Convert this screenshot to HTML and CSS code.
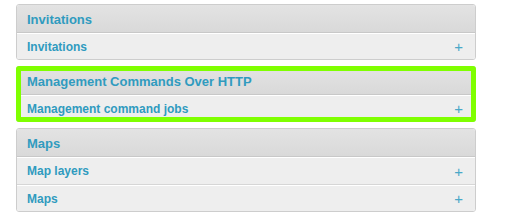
FILE: index.html
```html
<!DOCTYPE html>
<html lang="en">
<head>
  <meta charset="UTF-8" />
  <title>Site administration</title>
  <link rel="stylesheet" href="styles.css">
</head>
<body>
  <div class="dashboard">
    <div class="module">
      <h2>Invitations</h2>
      <div class="row"><a href="#">Invitations</a><span class="add">+</span></div>
    </div>
    <div class="module selected">
      <h2>Management Commands Over HTTP</h2>
      <div class="row"><a href="#">Management command jobs</a><span class="add">+</span></div>
    </div>
    <div class="module">
      <h2>Maps</h2>
      <div class="row"><a href="#">Map layers</a><span class="add">+</span></div>
      <div class="row"><a href="#">Maps</a><span class="add">+</span></div>
    </div>
  </div>
</body>
</html>
```

FILE: styles.css
```css
* { box-sizing: border-box; }
html, body {
  margin: 0;
  padding: 0;
  background: #fff;
  font-family: "Liberation Sans", Arial, sans-serif;
}
.dashboard {
  width: 460px;
  margin: 4px 0 0 16px;
}
.module {
  border: 1px solid #cdcdcd;
  border-radius: 3px;
  margin-bottom: 6px;
  overflow: hidden;
}
.module.selected {
  outline: 5px solid #7fff00;
  outline-offset: -5px;
}
.module h2 {
  margin: 0;
  height: 28px;
  padding: 1px 10px 0;
  line-height: 28px;
  font-size: 13px;
  font-weight: bold;
  color: #309bbf;
  background: linear-gradient(#e3e3e3, #d9d9d9);
  border-bottom: 1px solid #c8c8c8;
}
.row {
  display: flex;
  align-items: center;
  justify-content: space-between;
  height: 28px;
  padding: 0 12px 0 10px;
  background: #eee;
  border-top: 1px solid #fff;
  border-bottom: 1px solid #d6d6d6;
}
.row:last-child { border-bottom: none; height: 26px; }
.row a {
  font-size: 12px;
  font-weight: bold;
  color: #309bbf;
  text-decoration: none;
}
.add {
  font-size: 15px;
  font-weight: normal;
  color: #4aa8c8;
}
```
